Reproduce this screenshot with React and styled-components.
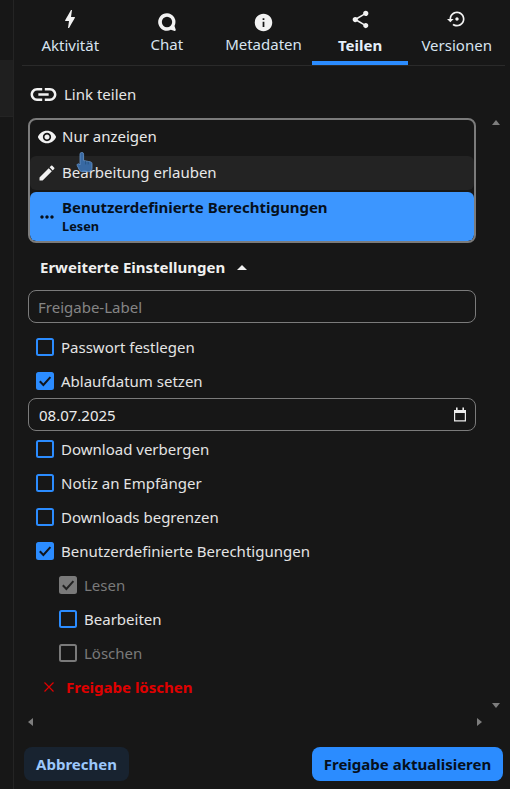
import styled, { createGlobalStyle } from "styled-components";

const GlobalStyle = createGlobalStyle`
  html, body {
    margin: 0;
    padding: 0;
    height: 100%;
    background: #171717;
    font-family: "Noto Sans", sans-serif;
    overflow: hidden;
  }
`;

const icons = {
  link: "M3.9 12c0-1.71 1.39-3.1 3.1-3.1h4V7H7c-2.76 0-5 2.24-5 5s2.24 5 5 5h4v-1.9H7c-1.71 0-3.1-1.39-3.1-3.1zM8 13h8v-2H8v2zm9-6h-4v1.9h4c1.71 0 3.1 1.39 3.1 3.1s-1.39 3.1-3.1 3.1h-4V17h4c2.76 0 5-2.24 5-5s-2.24-5-5-5z",
  eye: "M12 4.5C7 4.5 2.73 7.61 1 12c1.73 4.39 6 7.5 11 7.5s9.27-3.11 11-7.5c-1.73-4.39-6-7.5-11-7.5zM12 17c-2.76 0-5-2.24-5-5s2.24-5 5-5 5 2.24 5 5-2.24 5-5 5zm0-8c-1.66 0-3 1.34-3 3s1.34 3 3 3 3-1.34 3-3-1.34-3-3-3z",
  edit: "M3 17.25V21h3.75L17.81 9.94l-3.75-3.75L3 17.25zM20.71 7.04c.39-.39.39-1.02 0-1.41l-2.34-2.34c-.39-.39-1.02-.39-1.41 0l-1.83 1.83 3.75 3.75 1.83-1.83z",
  more: "M6 10c-1.1 0-2 .9-2 2s.9 2 2 2 2-.9 2-2-.9-2-2-2zm12 0c-1.1 0-2 .9-2 2s.9 2 2 2 2-.9 2-2-.9-2-2-2zm-6 0c-1.1 0-2 .9-2 2s.9 2 2 2 2-.9 2-2-.9-2-2-2z",
  info: "M12 2C6.48 2 2 6.48 2 12s4.48 10 10 10 10-4.48 10-10S17.52 2 12 2zm1 15h-2v-6h2v6zm0-8h-2V7h2v2z",
  share: "M18 16.08c-.76 0-1.44.3-1.96.77L8.91 12.7c.05-.23.09-.46.09-.7s-.04-.47-.09-.7l7.05-4.11c.54.5 1.25.81 2.04.81 1.66 0 3-1.34 3-3s-1.34-3-3-3-3 1.34-3 3c0 .24.04.47.09.7L8.04 9.81C7.5 9.31 6.79 9 6 9c-1.66 0-3 1.34-3 3s1.34 3 3 3c.79 0 1.5-.31 2.04-.81l7.12 4.16c-.05.21-.08.43-.08.65 0 1.61 1.31 2.92 2.92 2.92s2.92-1.31 2.92-2.92-1.31-2.92-2.92-2.92z",
  restore: "M14 12c0-1.1-.9-2-2-2s-2 .9-2 2 .9 2 2 2 2-.9 2-2zm-2-9c-4.97 0-9 4.03-9 9H0l4 4 4-4H5c0-3.87 3.13-7 7-7s7 3.13 7 7-3.13 7-7 7c-1.51 0-2.91-.49-4.06-1.3l-1.42 1.44C8.04 20.3 9.94 21 12 21c4.97 0 9-4.03 9-9s-4.03-9-9-9z",
  bolt: "M11 21h-1l1-7H7.5c-.58 0-.57-.32-.38-.66.19-.34.05-.08.07-.12C8.48 10.94 10.42 7.54 13 3h1l-1 7h3.5c.49 0 .56.33.47.51l-.07.15C12.96 17.55 11 21 11 21z",
  chat: "M12 1.5a10.5 10.5 0 1 0 4.6 19.9l4.6 1.3c.9.2 1.6-.5 1.3-1.4l-1.5-4.5A10.5 10.5 0 0 0 12 1.5zm0 4.3a6.2 6.2 0 1 1 0 12.4 6.2 6.2 0 0 1 0-12.4z",
};

const Icon = ({ name, size = 24, color = "#f2f2f2" }) => (
  <svg width={size} height={size} viewBox="0 0 24 24" fill={color}>
    <path fillRule="evenodd" d={icons[name]} />
  </svg>
);

const Page = styled.div`
  width: 510px;
  height: 789px;
  display: flex;
  position: relative;
  overflow: hidden;
  color: #f2f2f2;
`;

const SideStrip = styled.div`
  width: 13px;
  border-right: 1px solid #242424;
  padding-top: 60px;
  flex-shrink: 0;
`;

const StripBlock = styled.div`
  height: 56px;
  background: #1f1f1f;
  border-bottom: 1px solid #242424;
`;

const Panel = styled.div`
  width: 488px;
  padding-left: 8px;
  display: flex;
  flex-direction: column;
`;

const TabBar = styled.div`
  display: flex;
  height: 65px;
  width: 483px;
  border-bottom: 1px solid #2a2a2a;
`;

const Tab = styled.div`
  width: 96.6px;
  height: 65px;
  box-sizing: border-box;
  display: flex;
  flex-direction: column;
  align-items: center;
  padding-top: 7px;
  font-size: 15px;
  line-height: 20px;
  color: ${(p) => (p.$active ? "#e4effb" : "#d8e4f0")};
  font-weight: ${(p) => (p.$active ? 700 : 400)};
  border-bottom: 4px solid ${(p) => (p.$active ? "#2b8cff" : "transparent")};
`;

const TabIcon = styled.div`
  height: 24px;
  box-sizing: border-box;
  padding-top: ${(p) => (p.$drop || 0) * 2}px;
  margin-bottom: ${(p) => (p.$drop ? 3 : 4)}px;
  display: flex;
  align-items: center;
`;

const ScrollRow = styled.div`
  display: flex;
  height: 648px;
`;

const Content = styled.div`
  width: 454px;
  padding-left: 6px;
  flex-shrink: 0;
`;

const ShareLink = styled.div`
  display: flex;
  align-items: center;
  gap: 5px;
  height: 31px;
  margin-top: 13px;
  margin-bottom: 8px;
  font-size: 15px;
  color: #e6e6e6;
`;

const RaisedLabel = styled.span`
  padding-bottom: 2px;
`;

const SelectBox = styled.div`
  width: 448px;
  height: 125px;
  box-sizing: border-box;
  border: 2px solid #7b7b7b;
  border-radius: 8px;
  display: flex;
  flex-direction: column;
  gap: 2px;
  overflow: hidden;
`;

const Option = styled.div`
  height: 34px;
  flex-shrink: 0;
  display: flex;
  align-items: center;
  gap: 5px;
  padding-left: 7px;
  font-size: 15px;
  color: #e8e8e8;
  border-radius: 6px;
  background: ${(p) => (p.$hover ? "#232323" : "transparent")};
`;

const SelectedOption = styled.div`
  height: 49px;
  flex-shrink: 0;
  display: flex;
  align-items: center;
  gap: 5px;
  padding-left: 7px;
  background: #3c96ff;
  color: #06101c;
  border-radius: 6px;
`;

const OptionText = styled.div`
  display: flex;
  flex-direction: column;
  font-weight: 700;
`;

const OptionTitle = styled.span`
  font-size: 15px;
  line-height: 16px;
  margin-bottom: 2px;
`;

const OptionSub = styled.span`
  font-size: 12.75px;
  line-height: 18px;
`;

const AdvancedToggle = styled.div`
  display: flex;
  align-items: center;
  gap: 12px;
  height: 47px;
  box-sizing: border-box;
  padding: 1px 0 0 12px;
  font-size: 15px;
  font-weight: 700;
  color: #f0f0f0;
`;

const UpCaret = styled.span`
  width: 0;
  height: 0;
  border-left: 5px solid transparent;
  border-right: 5px solid transparent;
  border-bottom: 5px solid #f0f0f0;
`;

const TextField = styled.div`
  width: 448px;
  height: 33px;
  box-sizing: border-box;
  border: 1px solid #7b7b7b;
  border-radius: 8px;
  display: flex;
  align-items: center;
  justify-content: space-between;
  padding: 0 8px 0 ${(p) => (p.$placeholder ? 9 : 10)}px;
  margin-bottom: ${(p) => p.$below}px;
  font-size: 15px;
  color: ${(p) => (p.$placeholder ? "#858585" : "#ececec")};
`;

const CheckRow = styled.div`
  height: 34px;
  display: flex;
  align-items: center;
  gap: 7px;
  padding-left: ${(p) => (p.$nested ? "31px" : "8px")};
  font-size: 15px;
  color: ${(p) => (p.$disabled ? "#7a7a7a" : "#e4e4e4")};
`;

const Box = styled.span`
  width: 18px;
  height: 18px;
  box-sizing: border-box;
  flex-shrink: 0;
  border-radius: 2.5px;
  display: flex;
  align-items: center;
  justify-content: center;
  border: 2px solid ${(p) => (p.$disabled ? "#7a7a7a" : "#2b8cff")};
  background: ${(p) =>
    !p.$checked ? "transparent" : p.$disabled ? "#7a7a7a" : "#2b8cff"};
`;

const DeleteRow = styled.div`
  height: 34px;
  display: flex;
  align-items: center;
  gap: 11px;
  padding-left: 15px;
  font-size: 15px;
  font-weight: 700;
  color: #e00000;
`;

const VerticalTrack = styled.div`
  width: 29px;
  display: flex;
  flex-direction: column;
  justify-content: space-between;
  align-items: center;
  padding: 54px 0 6px;
`;

const HorizontalTrack = styled.div`
  width: 454px;
  padding-left: 6px;
  height: 16px;
  display: flex;
  align-items: center;
  justify-content: space-between;
`;

const ArrowUp = styled.span`
  border-left: 4.5px solid transparent;
  border-right: 4.5px solid transparent;
  border-bottom: 5px solid #7d7d7d;
`;

const ArrowDown = styled.span`
  border-left: 4.5px solid transparent;
  border-right: 4.5px solid transparent;
  border-top: 5px solid #7d7d7d;
`;

const ArrowLeft = styled.span`
  border-top: 4.5px solid transparent;
  border-bottom: 4.5px solid transparent;
  border-right: 5px solid #7d7d7d;
`;

const ArrowRight = styled.span`
  border-top: 4.5px solid transparent;
  border-bottom: 4.5px solid transparent;
  border-left: 5px solid #7d7d7d;
`;

const Footer = styled.div`
  width: 479px;
  display: flex;
  justify-content: space-between;
  align-items: center;
  padding: 17px 0 0 2px;
`;

const CancelButton = styled.button`
  height: 34px;
  width: 105px;
  border: 0;
  padding: 0;
  border-radius: 8px;
  background: #182330;
  color: #9cc8fb;
  font: 700 15px "Noto Sans", sans-serif;
`;

const SaveButton = styled.button`
  height: 34px;
  width: 191px;
  border: 0;
  padding: 0;
  border-radius: 8px;
  background: #2b8cff;
  color: #06101c;
  font: 700 15px "Noto Sans", sans-serif;
`;

const Cursor = styled.svg`
  position: absolute;
  left: 76px;
  top: 152px;
`;

const tabs = [
  { label: "Aktivität", icon: "bolt", size: 24 },
  { label: "Chat", icon: "chat", size: 20, drop: 3 },
  { label: "Metadaten", icon: "info", size: 21, drop: 3 },
  { label: "Teilen", icon: "share", size: 21, active: true },
  { label: "Versionen", icon: "restore", size: 20 },
];

const Check = ({ color }) => (
  <svg width="14" height="14" viewBox="0 0 14 14" fill="none">
    <path d="M1.8 7.2 5.4 11 12.4 3.2" stroke={color} strokeWidth="2" />
  </svg>
);

const CheckItem = ({ label, checked, disabled, nested }) => (
  <CheckRow $nested={nested} $disabled={disabled}>
    <Box $checked={checked} $disabled={disabled}>
      {checked && <Check color={disabled ? "#222" : "#10151c"} />}
    </Box>
    {label}
  </CheckRow>
);

export default function App() {
  return (
    <>
      <GlobalStyle />
      <Page>
        <SideStrip>
          <StripBlock />
        </SideStrip>
        <Panel>
          <TabBar>
            {tabs.map((tab) => (
              <Tab key={tab.label} $active={tab.active}>
                <TabIcon $drop={tab.drop}>
                  <Icon name={tab.icon} size={tab.size} />
                </TabIcon>
                {tab.label}
              </Tab>
            ))}
          </TabBar>
          <ScrollRow>
            <Content>
              <ShareLink>
                <Icon name="link" size={31} />
                <RaisedLabel>Link teilen</RaisedLabel>
              </ShareLink>
              <SelectBox>
                <Option>
                  <Icon name="eye" size={20} />
                  <RaisedLabel>Nur anzeigen</RaisedLabel>
                </Option>
                <Option $hover>
                  <Icon name="edit" size={20} />
                  <RaisedLabel>Bearbeitung erlauben</RaisedLabel>
                </Option>
                <SelectedOption>
                  <Icon name="more" size={20} color="#06101c" />
                  <OptionText>
                    <OptionTitle>Benutzerdefinierte Berechtigungen</OptionTitle>
                    <OptionSub>Lesen</OptionSub>
                  </OptionText>
                </SelectedOption>
              </SelectBox>
              <AdvancedToggle>
                Erweiterte Einstellungen
                <UpCaret />
              </AdvancedToggle>
              <TextField $placeholder $below={7}>
                Freigabe-Label
              </TextField>
              <CheckItem label="Passwort festlegen" />
              <CheckItem label="Ablaufdatum setzen" checked />
              <TextField $below={1}>
                08.07.2025
                <svg width="14" height="15" viewBox="0 0 14 15" fill="none">
                  <path d="M1.6 3.6h10.8v10.2H1.6z" stroke="#ececec" strokeWidth="1.2" />
                  <path d="M1 3h12v3H1zM3 .5h1.6V3H3zM9.4.5H11V3H9.4z" fill="#ececec" />
                </svg>
              </TextField>
              <CheckItem label="Download verbergen" />
              <CheckItem label="Notiz an Empfänger" />
              <CheckItem label="Downloads begrenzen" />
              <CheckItem label="Benutzerdefinierte Berechtigungen" checked />
              <CheckItem label="Lesen" checked disabled nested />
              <CheckItem label="Bearbeiten" nested />
              <CheckItem label="Löschen" disabled nested />
              <DeleteRow>
                <svg width="12" height="12" viewBox="0 0 12 12" fill="none">
                  <path d="M1.5 1.5l9 9M10.5 1.5l-9 9" stroke="#e00000" strokeWidth="1.2" />
                </svg>
                Freigabe löschen
              </DeleteRow>
            </Content>
            <VerticalTrack>
              <ArrowUp />
              <ArrowDown />
            </VerticalTrack>
          </ScrollRow>
          <HorizontalTrack>
            <ArrowLeft />
            <ArrowRight />
          </HorizontalTrack>
          <Footer>
            <CancelButton>Abbrechen</CancelButton>
            <SaveButton>Freigabe aktualisieren</SaveButton>
          </Footer>
        </Panel>
        <Cursor width="18" height="22" viewBox="0 0 18 22">
          <path
            d="M4 2.2a1.8 1.8 0 0 1 3.6 0v6.3l7 1.4c1 .2 1.4 1 1.4 2v4.3c0 2-1.5 3.5-3.5 3.5H6.5c-1.4 0-2.4-.6-3.1-1.7L1.2 13.5c-.6-1.2 1-2.3 2-1.3l.8.8z"
            fill="#3a6fae"
            stroke="#6ea0d8"
            strokeWidth="0.8"
            opacity="0.92"
          />
          <path d="M9.6 9v3.4M12.2 9.6v2.8" stroke="#24507f" strokeWidth="0.8" />
        </Cursor>
      </Page>
    </>
  );
}
